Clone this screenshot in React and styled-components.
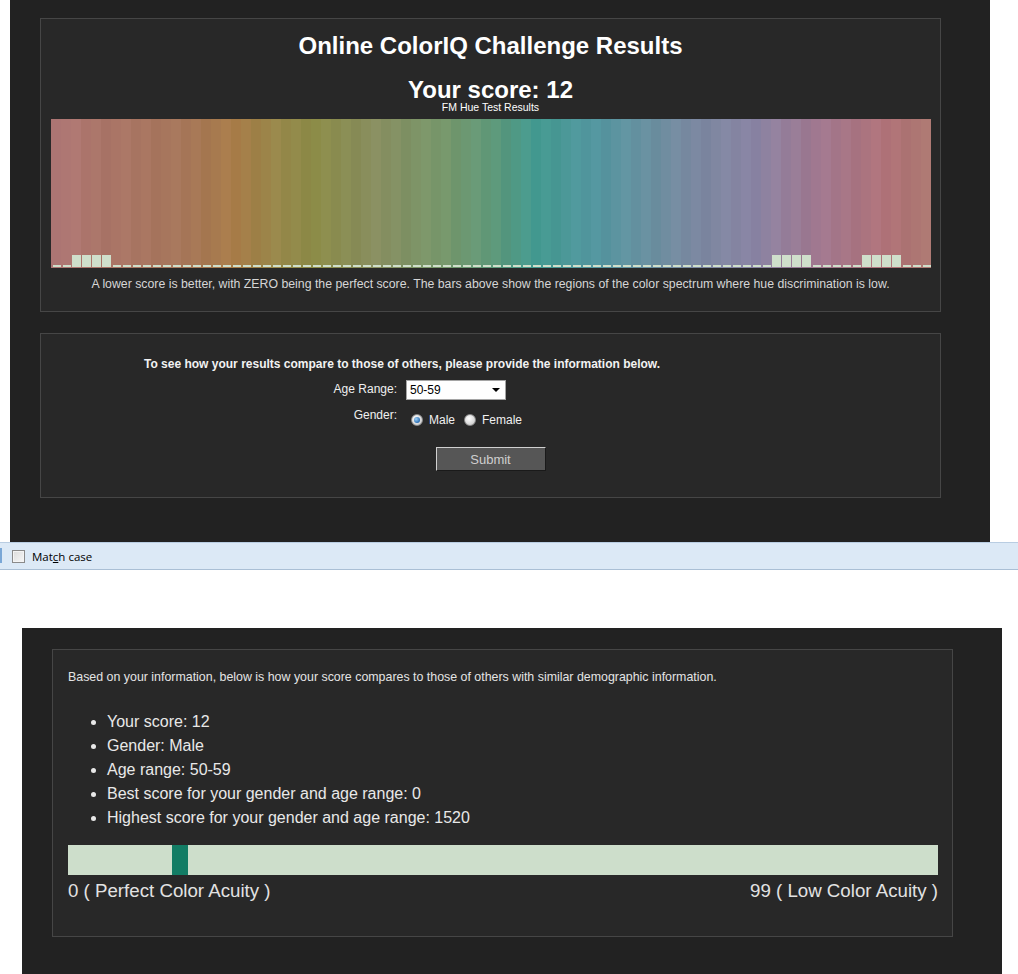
import React from "react";
import styled, { createGlobalStyle } from "styled-components";

const GlobalStyle = createGlobalStyle`
  html, body {
    margin: 0;
    padding: 0;
    background: #ffffff;
  }
  body {
    font-family: "Liberation Sans", Arial, sans-serif;
  }
`;

const Page = styled.div`
  width: 1018px;
  display: flex;
  flex-direction: column;
`;

const DarkPanel = styled.div`
  width: 980px;
  margin-left: ${({ offset }) => offset}px;
  padding-top: ${({ top }) => top}px;
  padding-bottom: ${({ bottom }) => bottom}px;
  background: #222222;
  box-sizing: border-box;
`;

const Box = styled.div`
  width: 901px;
  margin-left: 30px;
  margin-top: ${({ gap }) => gap || 0}px;
  border: 1px solid #464646;
  background: #282828;
  box-sizing: border-box;
  padding: ${({ pad }) => pad};
  display: flex;
  flex-direction: column;
`;

const Title = styled.h1`
  margin: 14px 0 0;
  font-size: 24px;
  line-height: 26px;
  font-weight: bold;
  color: #ffffff;
  text-align: center;
`;

const Score = styled.h2`
  margin: 19px 0 0;
  font-size: 24px;
  line-height: 24px;
  font-weight: bold;
  color: #ffffff;
  text-align: center;
`;

const SubTitle = styled.div`
  font-size: 10.5px;
  line-height: 11px;
  color: #ffffff;
  text-align: center;
`;

const Spectrum = styled.div`
  margin: 6px 0 0 10px;
  width: 880px;
  height: 149px;
  display: flex;
`;

const Column = styled.div`
  width: 10px;
  height: 100%;
  display: flex;
  flex-direction: column;
  justify-content: flex-end;
  align-items: flex-end;
`;

const Bar = styled.div`
  width: ${({ tall }) => (tall ? 9 : 8)}px;
  height: ${({ tall }) => (tall ? 12 : 2)}px;
  margin-bottom: 1px;
  background: #cfdfcb;
`;

const Caption = styled.p`
  margin: 9px 0 0;
  font-size: 12.3px;
  line-height: 14px;
  color: #d6d6d6;
  text-align: center;
`;

const Intro = styled.div`
  margin-left: 103px;
  font-size: 12px;
  line-height: 14px;
  font-weight: bold;
  color: #f2f2f2;
`;

const FormGrid = styled.div`
  display: grid;
  grid-template-columns: 253px auto;
  column-gap: 9px;
  row-gap: 8px;
  margin: 9px 0 0 103px;
  align-items: start;
`;

const Label = styled.div`
  text-align: right;
  font-size: 12px;
  line-height: 14px;
  color: #f0f0f0;
  padding-top: ${({ pt }) => pt || 0}px;
`;

const SelectWrap = styled.div`
  position: relative;
  width: 100px;
  height: 20px;
`;

const Select = styled.select`
  appearance: none;
  width: 100px;
  height: 20px;
  margin: 0;
  padding: 0 0 0 3px;
  border: 1px solid #a5a5a5;
  background: #ffffff;
  font-family: "Liberation Sans", Arial, sans-serif;
  font-size: 12px;
  color: #000000;
  outline: none;
`;

const Arrow = styled.span`
  position: absolute;
  right: 6px;
  top: 8px;
  width: 0;
  height: 0;
  border-left: 4px solid transparent;
  border-right: 4px solid transparent;
  border-top: 4px solid #000000;
  pointer-events: none;
`;

const Radios = styled.div`
  display: flex;
  align-items: center;
  height: 16px;
  margin: 4px 0 0 5px;
`;

const Radio = styled.input.attrs({ type: "radio" })`
  appearance: none;
  width: 12px;
  height: 12px;
  margin: 0 6px 0 0;
  border-radius: 50%;
  border: 1px solid #8a8a8a;
  background: radial-gradient(circle at 40% 35%, #ffffff 0%, #d9d9d9 60%, #bdbdbd 100%);
  box-sizing: border-box;
  display: grid;
  place-content: center;

  &:checked::before {
    content: "";
    width: 6px;
    height: 6px;
    border-radius: 50%;
    background: radial-gradient(circle at 35% 35%, #9fd0f5 0%, #2a6fb5 70%, #1d4f8c 100%);
  }
`;

const RadioText = styled.label`
  font-size: 12px;
  color: #f0f0f0;
  margin-right: 9px;
`;

const Submit = styled.button`
  align-self: center;
  margin-top: 19px;
  width: 110px;
  height: 24px;
  padding: 0;
  background: #565656;
  border-style: solid;
  border-width: 1px;
  border-color: #d0d0d0 #1a1a1a #1a1a1a #d0d0d0;
  color: #cfcfcf;
  font-family: "Liberation Sans", Arial, sans-serif;
  font-size: 13px;
`;

const FindBar = styled.div`
  position: relative;
  height: 28px;
  box-sizing: border-box;
  background: #dce9f6;
  border-top: 1px solid #b9cde2;
  border-bottom: 1px solid #aabfd5;
  display: flex;
  align-items: center;
  padding-left: 12px;
  font-family: "Open Sans", "Noto Sans", sans-serif;
  font-size: 11.5px;
  color: #000000;
`;

const FindEdge = styled.span`
  position: absolute;
  left: 0;
  top: 5px;
  width: 2px;
  height: 15px;
  background: #7aa7d6;
`;

const CheckBox = styled.span`
  width: 11px;
  height: 11px;
  border: 1px solid #8a8a8a;
  background: linear-gradient(135deg, #dcdcdc, #f7f7f7);
  box-shadow: inset 0 0 0 1px #f4f4f4;
  margin-right: 7px;
`;

const Accel = styled.span`
  text-decoration: underline;
`;

const Spacer = styled.div`
  height: 58px;
`;

const Info = styled.p`
  margin: 0;
  font-size: 12.4px;
  line-height: 14px;
  color: #e4e4e4;
`;

const List = styled.ul`
  margin: 26px 0 0;
  padding-left: 39px;
  list-style: disc;
`;

const Item = styled.li`
  font-size: 16px;
  line-height: 24px;
  color: #e8e8e8;
`;

const Meter = styled.div`
  margin-top: 15px;
  width: 870px;
  height: 30px;
  background: #cddecb;
  display: flex;
`;

const Marker = styled.div`
  width: 16px;
  height: 100%;
  background: #127c64;
`;

const Scale = styled.div`
  margin-top: 5px;
  width: 870px;
  display: flex;
  justify-content: space-between;
  font-size: 18.7px;
  line-height: 22px;
  color: #e2e2e2;
`;

const stops = [
  [0, [176, 120, 120]],
  [0.05, [171, 117, 106]],
  [0.15, [166, 118, 90]],
  [0.21, [168, 124, 72]],
  [0.26, [150, 136, 74]],
  [0.3, [140, 140, 72]],
  [0.37, [136, 142, 96]],
  [0.45, [118, 152, 108]],
  [0.51, [90, 152, 124]],
  [0.55, [67, 154, 144]],
  [0.62, [84, 150, 160]],
  [0.68, [106, 144, 160]],
  [0.73, [122, 136, 160]],
  [0.8, [138, 132, 164]],
  [0.87, [160, 120, 144]],
  [0.95, [176, 114, 120]],
  [1, [172, 120, 112]],
];

const colorAt = (t, i) => {
  let k = 0;
  while (k < stops.length - 2 && t > stops[k + 1][0]) k++;
  const [p0, c0] = stops[k];
  const [p1, c1] = stops[k + 1];
  const f = Math.min(1, Math.max(0, (t - p0) / (p1 - p0)));
  const jitter = ((i * 37) % 5) - 2;
  const c = c0.map((v, j) => Math.round(v + (c1[j] - v) * f + jitter * 1.5));
  return `rgb(${c[0]}, ${c[1]}, ${c[2]})`;
};

const tallBars = [2, 3, 4, 5, 72, 73, 74, 75, 81, 82, 83, 84];
const columns = Array.from({ length: 88 }, (_, i) => ({
  color: colorAt((i + 0.5) / 88, i),
  tall: tallBars.includes(i),
}));

const stats = [
  "Your score: 12",
  "Gender: Male",
  "Age range: 50-59",
  "Best score for your gender and age range: 0",
  "Highest score for your gender and age range: 1520",
];

const score = 12;

const App = () => {
  return (
    <Page>
      <GlobalStyle />
      <DarkPanel offset={10} top={18} bottom={44}>
        <Box pad="0 0 20px">
          <Title>Online ColorIQ Challenge Results</Title>
          <Score>Your score: {score}</Score>
          <SubTitle>FM Hue Test Results</SubTitle>
          <Spectrum>
            {columns.map((col, i) => (
              <Column key={i} style={{ background: col.color }}>
                <Bar tall={col.tall} />
              </Column>
            ))}
          </Spectrum>
          <Caption>
            A lower score is better, with ZERO being the perfect score. The bars above show the regions of the color spectrum where hue discrimination is low.
          </Caption>
        </Box>
        <Box gap={21} pad="23px 0 26px">
          <Intro>To see how your results compare to those of others, please provide the information below.</Intro>
          <FormGrid>
            <Label pt={2}>Age Range:</Label>
            <SelectWrap>
              <Select defaultValue="50-59">
                <option>Under 20</option>
                <option>20-29</option>
                <option>30-39</option>
                <option>40-49</option>
                <option>50-59</option>
                <option>60+</option>
              </Select>
              <Arrow />
            </SelectWrap>
            <Label>Gender:</Label>
            <Radios>
              <Radio id="male" name="gender" defaultChecked />
              <RadioText htmlFor="male">Male</RadioText>
              <Radio id="female" name="gender" />
              <RadioText htmlFor="female">Female</RadioText>
            </Radios>
          </FormGrid>
          <Submit>Submit</Submit>
        </Box>
      </DarkPanel>
      <FindBar>
        <FindEdge />
        <CheckBox />
        <span>
          Mat<Accel>c</Accel>h case
        </span>
      </FindBar>
      <Spacer />
      <DarkPanel offset={22} top={21} bottom={40}>
        <Box pad="20px 15px 34px">
          <Info>Based on your information, below is how your score compares to those of others with similar demographic information.</Info>
          <List>
            {stats.map((s) => (
              <Item key={s}>{s}</Item>
            ))}
          </List>
          <Meter>
            <Marker style={{ marginLeft: `${Math.round((score / 99) * 870) - 1}px` }} />
          </Meter>
          <Scale>
            <span>0 ( Perfect Color Acuity )</span>
            <span>99 ( Low Color Acuity )</span>
          </Scale>
        </Box>
      </DarkPanel>
    </Page>
  );
};

export default App;
